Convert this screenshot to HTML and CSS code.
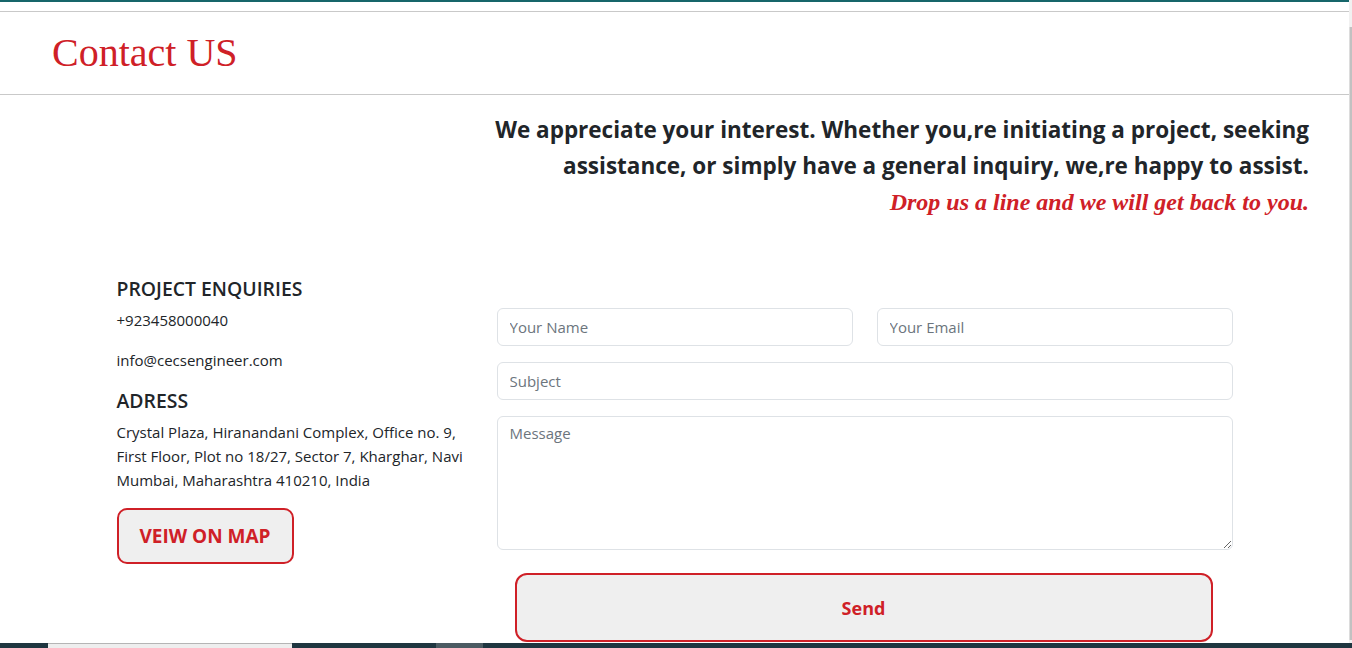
FILE: index.html
```html
<!DOCTYPE html>
<html lang="en">
<head>
<meta charset="utf-8">
<title>Contact US</title>
<link rel="stylesheet" href="styles.css">
</head>
<body>
<div class="topbar"></div>
<header class="page-head">
  <h1 class="title">Contact US</h1>
</header>
<section class="intro">
  <p class="lead">We appreciate your interest. Whether you,re initiating a project, seeking<br>assistance, or simply have a general inquiry, we,re happy to assist.</p>
  <p class="drop">Drop us a line and we will get back to you.</p>
</section>
<section class="container">
  <div class="info">
    <h2 class="label">PROJECT ENQUIRIES</h2>
    <p class="line">+923458000040</p>
    <p class="line last">info@cecsengineer.com</p>
    <h2 class="label">ADRESS</h2>
    <p class="addr">Crystal Plaza, Hiranandani Complex, Office no. 9, First Floor, Plot no 18/27, Sector 7, Kharghar, Navi Mumbai, Maharashtra 410210, India</p>
    <button class="map-btn" type="button">VEIW ON MAP</button>
  </div>
  <form class="form">
    <div class="pair">
      <input class="field" type="text" placeholder="Your Name">
      <input class="field" type="email" placeholder="Your Email">
    </div>
    <input class="field" type="text" placeholder="Subject">
    <textarea class="field area" placeholder="Message"></textarea>
    <button class="send" type="button">Send</button>
  </form>
</section>
<div class="scrollbar"><div class="thumb"></div></div>
<div class="taskbar">
  <div class="tb-app"></div>
  <div class="tb-item"></div>
</div>
</body>
</html>
```
FILE: styles.css
```css
* { box-sizing: border-box; }
html, body { margin: 0; padding: 0; }
body {
  width: 1349px;
  height: 648px;
  overflow: hidden;
  background: #fff;
  font-family: "Open Sans", "Noto Sans", sans-serif;
  color: #212529;
}
.topbar { height: 2px; background: #17666a; }
.page-head {
  margin-top: 9px;
  border-top: 1px solid #c9c9c9;
  border-bottom: 1px solid #c9c9c9;
  height: 84px;
  padding-left: 52px;
  display: flex;
  align-items: center;
}
.title {
  margin: 0;
  font-family: "Liberation Serif", "Times New Roman", serif;
  font-weight: 400;
  font-size: 40px;
  color: #cf2027;
  line-height: 1;
}
.intro {
  padding: 17px 40px 0 0;
  text-align: right;
}
.lead {
  margin: 0;
  font-weight: 700;
  font-size: 22.5px;
  line-height: 36px;
}
.drop {
  margin: 0;
  font-family: "Liberation Serif", "Times New Roman", serif;
  font-style: italic;
  font-weight: 700;
  font-size: 24px;
  line-height: 37px;
  color: #cf2027;
}
.container {
  width: 1140px;
  margin: 56px auto 0;
  display: flex;
}
.info {
  width: 380px;
  padding: 0 12px;
}
.label {
  margin: 0 0 7px;
  font-size: 19.4px;
  font-weight: 600;
  line-height: 24px;
}
.line {
  margin: 0 0 16px;
  font-size: 15px;
  line-height: 24px;
}
.line.last { margin-bottom: 17px; }
.addr {
  margin: 0 0 16px;
  font-size: 15px;
  line-height: 24px;
}
.map-btn {
  height: 56px;
  padding: 0 21px;
  border: 2px solid #cf2027;
  border-radius: 10px;
  background: #efefef;
  color: #cf2027;
  font-family: inherit;
  font-size: 19px;
  font-weight: 700;
}
.form {
  width: 760px;
  padding: 31px 12px 0;
  display: flex;
  flex-direction: column;
  gap: 16px;
}
.pair {
  display: flex;
  gap: 24px;
}
.pair .field { flex: 1; min-width: 0; }
.field {
  height: 38px;
  border: 1px solid #dee2e6;
  border-radius: 6px;
  padding: 6px 12px;
  font-family: inherit;
  font-size: 15px;
  color: #212529;
  background: #fff;
}
.field::placeholder { color: #6c757d; }
.area {
  height: 134px;
  resize: vertical;
}
.send {
  width: 698px;
  height: 69px;
  margin: 7px 0 0 18px;
  border: 2px solid #cf2027;
  border-radius: 12px;
  background: #efefef;
  color: #cf2027;
  font-family: inherit;
  font-size: 18px;
  font-weight: 700;
}
.scrollbar {
  position: fixed;
  top: 0;
  right: 0;
  width: 3px;
  height: 648px;
  background: #f1f1f1;
}
.thumb {
  margin-top: 27px;
  height: 613px;
  width: 3px;
  background: #c1c1c1;
  border-left: 1px solid #dcdcdc;
}
.taskbar {
  position: fixed;
  left: 0;
  bottom: 0;
  width: 1352px;
  height: 5px;
  background: #1f3640;
  display: flex;
}
.tb-app {
  margin-left: 48px;
  width: 244px;
  height: 5px;
  background: #eeeeee;
  border-top: 1px solid #b5b5b5;
}
.tb-item {
  margin-left: 144px;
  width: 47px;
  height: 5px;
  background: #4b5b62;
}
```
